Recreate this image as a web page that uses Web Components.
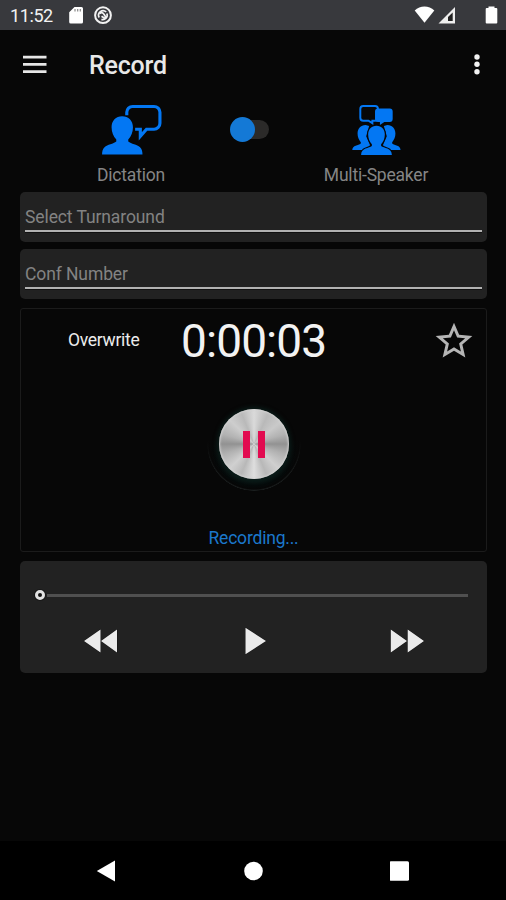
<!DOCTYPE html>
<html lang="en">
<head>
<meta charset="utf-8">
<title>Record</title>
<style>
  body {
    margin: 0;
    background: #070707;
    font-family: Roboto, "Liberation Sans", sans-serif;
  }
</style>
</head>
<body>
<recorder-app></recorder-app>

<script>
/**
 * Attach an open shadow root and fill it from a template.
 *
 * @param {HTMLElement} host - Element to attach to.
 * @param {string} html - Styles and markup.
 */
function render(host, html) {
  host.attachShadow({ mode: 'open' });
  const template = document.createElement('template');
  template.innerHTML = '<style>svg { display: block; }</style>' + html;
  host.shadowRoot.appendChild(template.content.cloneNode(true));
}

/**
 * Status Bar.
 */
class StatusBar extends HTMLElement {
  constructor() {
    super();
    render(this, `
      <style>
        :host {
          display: flex;
          align-items: center;
          box-sizing: border-box;
          height: 30px;
          padding: 0 8px 0 10px;
          background: #38393d;
          color: #f2f2f2;
          font-size: 18px;
        }
        .time { width: 59px; letter-spacing: -0.4px; line-height: 32px; padding-top: 2px; }
        .sync { margin-left: 9px; }
        .end { margin-left: auto; }
      </style>
      <span class="time">11:52</span>
      <svg width="16" height="30" viewBox="0 0 16 30">
        <path d="M5.500 7H12.500a1.500 1.500 0 0 1 1.500 1.500V22a1.500 1.500 0 0 1-1.500 1.500H1.700A1.500 1.500 0 0 1 .2 22V12.200z" fill="#fff"/>
        <path d="M6 9v2.500M8.700 9v2.500M11.300 9v2.500" stroke="#888" stroke-width="1.200"/>
      </svg>
      <svg class="sync" width="20" height="30" viewBox="0 0 20 30" fill="none" stroke="#f2f2f2">
        <circle cx="9" cy="15.200" r="7.900" stroke-width="2"/>
        <path d="M5.200 17.500a4.500 4.500 0 0 1 7-5.500M5.800 13.500c2-1.500 3.500-.5 4.200.8l2.500 3.900M12.900 13.500a4.500 4.500 0 0 1-5.500 5.900M7.500 16.200l3.500 2.300" stroke-width="1.700"/>
      </svg>
      <svg class="end" width="84" height="30" viewBox="0 0 84 30" fill="#fff">
        <path d="M.7 10.500C6 5.200 15 5.200 20.300 10.500L10.500 22.800z"/>
        <path d="M24.500 23.500L41 7v16.500z" fill="#eee"/>
        <path d="M38.700 12.500V21H34v-4z" fill="#222"/>
        <path d="M74.500 8V6.500h6V8h1.800a1 1 0 0 1 1 1v13.500a1 1 0 0 1-1 1h-9.600a1 1 0 0 1-1-1V9a1 1 0 0 1 1-1z"/>
      </svg>
    `);
  }
}
customElements.define('status-bar', StatusBar);

/**
 * App Bar, with the page title as its content.
 */
class AppBar extends HTMLElement {
  constructor() {
    super();
    render(this, `
      <style>
        :host {
          display: flex;
          align-items: center;
          box-sizing: border-box;
          height: 69px;
          padding: 0 26px 0 23px;
          color: #e8e8e8;
        }
        h1 {
          margin: 2px 0 0 42px;
          font-size: 25px;
          font-weight: 500;
          letter-spacing: -0.2px;
          flex: 1;
        }
      </style>
      <svg width="24" height="20" viewBox="0 0 24 20" stroke="#e6e6e6" stroke-width="2.800">
        <path d="M0 2.200h23.500M0 9.400h23.500M0 16.600h23.500"/>
      </svg>
      <h1><slot></slot></h1>
      <svg width="6" height="22" viewBox="0 0 6 22" fill="#f2f2f2">
        <circle cx="3" cy="3" r="2.700"/><circle cx="3" cy="10.300" r="2.700"/><circle cx="3" cy="17.700" r="2.700"/>
      </svg>
    `);
  }
}
customElements.define('app-bar', AppBar);

/**
 * Mode Option. Icon goes in the "icon" slot, the label is the content.
 */
class ModeOption extends HTMLElement {
  constructor() {
    super();
    render(this, `
      <style>
        :host {
          display: flex;
          flex-direction: column;
          align-items: center;
          color: #858585;
          font-size: 17.500px;
          line-height: 22px;
          letter-spacing: -0.200px;
          white-space: nowrap;
        }
        .label { margin-top: 9px; }
      </style>
      <slot name="icon"></slot>
      <span class="label"><slot></slot></span>
    `);
  }
}
customElements.define('mode-option', ModeOption);

/**
 * Toggle Switch, drawn in its off position.
 */
class ToggleSwitch extends HTMLElement {
  constructor() {
    super();
    render(this, `
      <style>
        :host {
          display: flex;
          align-items: center;
          width: 40px;
          height: 26px;
        }
        .track {
          width: 35px;
          height: 19px;
          margin-left: 4px;
          border-radius: 10px;
          background: #2b2a29;
          display: flex;
          align-items: center;
        }
        .thumb {
          flex: none;
          width: 25px;
          height: 25px;
          margin-left: -4px;
          border-radius: 50%;
          background: #1479d6;
        }
      </style>
      <div class="track"><div class="thumb"></div></div>
    `);
  }
}
customElements.define('toggle-switch', ToggleSwitch);

/**
 * Line Field. An underlined input showing its hint.
 */
class LineField extends HTMLElement {
  constructor() {
    super();
    render(this, `
      <style>
        :host {
          display: block;
          box-sizing: border-box;
          height: 50px;
          padding: 11px 5px 0;
          border-radius: 5px;
          background: #222;
          color: #838383;
          font-size: 17.500px;
          line-height: 28px;
          letter-spacing: -0.100px;
        }
        .line {
          height: 27px;
          border-bottom: 2px solid #b2b2b2;
          box-shadow: 0 1px 0 #111;
        }
      </style>
      <div class="line"><slot></slot></div>
    `);
  }
}
customElements.define('line-field', LineField);

/**
 * Record Button. Brushed metal disc with a pause sign.
 */
class RecordButton extends HTMLElement {
  constructor() {
    super();
    render(this, `
      <style>
        :host {
          display: grid;
          place-items: center;
          width: 94px;
          height: 94px;
          border-radius: 50%;
          background:
            linear-gradient(#070707 45%, rgba(7, 7, 7, 0) 85%),
            radial-gradient(circle, #0a1816 36px, #050a0a 42px, #060606 45px, #1a1e1e 46.500px, #070707 47px);
        }
        .disc {
          display: flex;
          align-items: center;
          justify-content: center;
          gap: 8px;
          width: 70px;
          height: 70px;
          border-radius: 50%;
          background: conic-gradient(#dadada, #b9b9b9 25deg, #c9c9c9 50deg, #b2b2b2 72deg, #929292 90deg,
            #b0b0b0 108deg, #cfcfcf 135deg, #b8b8b8 158deg, #dedede 180deg, #b8b8b8 203deg, #d0d0d0 225deg,
            #b0b0b0 252deg, #929292 270deg, #b2b2b2 288deg, #cdcdcd 315deg, #b9b9b9 338deg, #dadada);
          box-shadow: inset 0 0 2px 1px #d2d2d2, 0 0 4px 2px #0a1c19;
        }
        i {
          width: 7px;
          height: 27px;
          background: #e20b50;
        }
      </style>
      <div class="disc"><i></i><i></i></div>
    `);
  }
}
customElements.define('record-button', RecordButton);

/**
 * Recorder Panel. The elapsed time goes in the "time" slot, the status
 * text in the "status" slot and the edit mode is the content.
 */
class RecorderPanel extends HTMLElement {
  constructor() {
    super();
    render(this, `
      <style>
        :host {
          display: flex;
          flex-direction: column;
          align-items: center;
          box-sizing: border-box;
          height: 244px;
          border: 1px solid #1b1b1b;
          border-radius: 3px;
        }
        header {
          display: grid;
          grid-template-columns: 160px 1fr 54px;
          align-items: center;
          width: 100%;
          height: 64px;
        }
        .edit {
          padding: 0 0 2px 47px;
          color: #ececec;
          font-size: 17.500px;
          letter-spacing: -0.300px;
        }
        .time {
          color: #f2f2f2;
          font-size: 46px;
          line-height: 50px;
          letter-spacing: -0.900px;
        }
        record-button { margin-top: 24px; }
        .status {
          margin: 36px 0 0;
          color: #1b78cc;
          font-size: 17.500px;
          line-height: 22px;
          letter-spacing: -0.200px;
        }
      </style>
      <header>
        <span class="edit"><slot></slot></span>
        <span class="time"><slot name="time"></slot></span>
        <svg width="44" height="44" viewBox="0 0 24 24" fill="#b5b5b5">
          <path d="M22 9.240l-7.190-.62L12 2 9.190 8.630 2 9.240l5.460 4.730L5.820 21 12 17.270 18.180 21l-1.630-7.030L22 9.240zM12 15.400l-3.760 2.270 1-4.280-3.320-2.880 4.380-.38L12 6.100l1.710 4.040 4.380.38-3.320 2.880 1 4.280L12 15.400z"/>
        </svg>
      </header>
      <record-button></record-button>
      <p class="status"><slot name="status"></slot></p>
    `);
  }
}
customElements.define('recorder-panel', RecorderPanel);

/**
 * Player Panel. Seek bar and playback buttons.
 */
class PlayerPanel extends HTMLElement {
  constructor() {
    super();
    render(this, `
      <style>
        :host {
          display: block;
          box-sizing: border-box;
          height: 112px;
          padding: 28px 19px 0 15px;
          border-radius: 5px;
          background: #222;
        }
        .seek {
          display: flex;
          align-items: center;
          gap: 2px;
          height: 12px;
        }
        .knob {
          box-sizing: border-box;
          width: 10px;
          height: 10px;
          border: 3px solid #e2e2e2;
          border-radius: 50%;
          background: #111;
          box-shadow: 0 0 0 1px #181818;
        }
        .rail {
          flex: 1;
          height: 3px;
          background: #505050;
        }
        .buttons {
          display: flex;
          justify-content: space-between;
          align-items: center;
          margin-top: 26px;
          height: 28px;
          padding: 0 44px 0 49px;
        }
        svg { fill: #ebebeb; stroke: #151515; stroke-width: 1; paint-order: stroke; }
      </style>
      <div class="seek"><span class="knob"></span><span class="rail"></span></div>
      <div class="buttons">
        <svg width="34" height="28" viewBox="0 0 34 28"><path d="M0 14L16.500 2.500v23zM17 14L33 2.500v23z"/></svg>
        <svg width="26" height="28" viewBox="0 0 26 28"><path d="M4.500 .700L25 14 4.500 27.300z"/></svg>
        <svg width="34" height="28" viewBox="0 0 34 28"><path d="M.800 2.500L17 14 .800 25.500zM17.700 2.500L34 14 17.700 25.500z"/></svg>
      </div>
    `);
  }
}
customElements.define('player-panel', PlayerPanel);

/**
 * Navigation Bar. System back, home and overview buttons.
 */
class NavigationBar extends HTMLElement {
  constructor() {
    super();
    render(this, `
      <style>
        :host {
          display: flex;
          justify-content: space-between;
          align-items: center;
          box-sizing: border-box;
          height: 59px;
          padding: 1px 96px;
          background: #000;
        }
        svg { fill: #fff; }
      </style>
      <svg width="20" height="22" viewBox="0 0 20 22"><path d="M.800 11L19 .500v21z"/></svg>
      <svg width="20" height="20" viewBox="0 0 20 20"><circle cx="10.500" cy="10" r="9.300"/></svg>
      <svg width="20" height="20" viewBox="0 0 20 20"><rect x="-.500" y=".300" width="19.500" height="19.500" rx="1.500"/></svg>
    `);
  }
}
customElements.define('navigation-bar', NavigationBar);

/**
 * Recorder App. The whole screen.
 */
class RecorderApp extends HTMLElement {
  constructor() {
    super();
    render(this, `
      <style>
        :host {
          display: flex;
          flex-direction: column;
          height: 900px;
          overflow: hidden;
        }
        .modes {
          display: grid;
          grid-template-columns: 200px 37px 216px;
          align-items: start;
          justify-items: center;
          padding: 5px 0 0 31px;
          height: 88px;
        }
        toggle-switch { margin-top: 12px; }
        main {
          display: flex;
          flex-direction: column;
          flex: 1;
          padding: 0 19px 0 20px;
        }
        line-field + line-field { margin-top: 6.500px; }
        recorder-panel { margin-top: 9.500px; }
        player-panel { margin-top: 9px; }
      </style>
      <status-bar></status-bar>
      <app-bar>Record</app-bar>
      <section class="modes">
        <mode-option>
          <svg slot="icon" width="62" height="51" viewBox="0 0 62 52" fill="#0377f3">
            <path d="M22 12.500c-6.500 0-10.800 4.700-10.800 11.300 0 5 1.800 9.500 4.800 12.500v2C13 40.800 7 41.300 4 44c-2 1.900-2.500 4.500-2.500 7.500h41.200c0-3-.5-5.600-2.500-7.500-3-2.700-9-3.200-12-5.700v-2c3-3 4.800-7.500 4.800-12.500 0-6.600-4.500-11.300-11-11.300z"/>
            <path d="M26.700 11.500V8.500a6 6 0 0 1 6-6H54.500a6 6 0 0 1 6 6v11.200a6 6 0 0 1-6 6h-7.700l-6.300 7.200v-7.200h-5.300" fill="none" stroke="#0377f3" stroke-width="3.200"/>
          </svg>
          Dictation
        </mode-option>
        <toggle-switch></toggle-switch>
        <mode-option>
          <svg slot="icon" width="50" height="51" viewBox="0 0 50 52" fill="#0377f3">
            <path d="M14.500 21.500c-5.300 0-8.300 3.700-8.300 8.700 0 3.600 1.300 6.700 3.300 8.700v1.400C7 42.300 1 42 .8 47H15l4-5-4-9 3-10.500z"/>
            <path d="M36.500 21.500c5.300 0 8.300 3.700 8.300 8.700 0 3.600-1.300 6.700-3.300 8.700v1.400C44 42.300 50 42 50 47H36l-4-5 4-9-3-10.500z"/>
            <path d="M25.500 22.200c-5.300 0-8.500 3.600-8.500 9 0 4 1.500 7.500 3.800 9.800v1.700C18 45 10 44.300 9.800 51.900h31.400C41 44.300 33 45 30.200 42.700V41c2.300-2.300 3.800-5.800 3.800-9.800 0-5.400-3.200-9-8.500-9z" stroke="#070707" stroke-width="2.200" paint-order="stroke"/>
            <path d="M12 2h12a3 3 0 0 1 3 3v9a3 3 0 0 1-3 3h-2.700v2.500l-4-2.500H12a3 3 0 0 1-3-3V5a3 3 0 0 1 3-3z" fill="none" stroke="#0377f3" stroke-width="2"/>
            <path d="M27 4.700h12a3 3 0 0 1 3 3v7.700a3 3 0 0 1-3 3h-5.500l-4.500 3v-3h-2a3 3 0 0 1-3-3V7.700a3 3 0 0 1 3-3z"/>
          </svg>
          Multi-Speaker
        </mode-option>
      </section>
      <main>
        <line-field>Select Turnaround</line-field>
        <line-field>Conf Number</line-field>
        <recorder-panel>
          Overwrite
          <span slot="time">0:00:03</span>
          <span slot="status">Recording...</span>
        </recorder-panel>
        <player-panel></player-panel>
      </main>
      <navigation-bar></navigation-bar>
    `);
  }
}
customElements.define('recorder-app', RecorderApp);
</script>
</body>
</html>
